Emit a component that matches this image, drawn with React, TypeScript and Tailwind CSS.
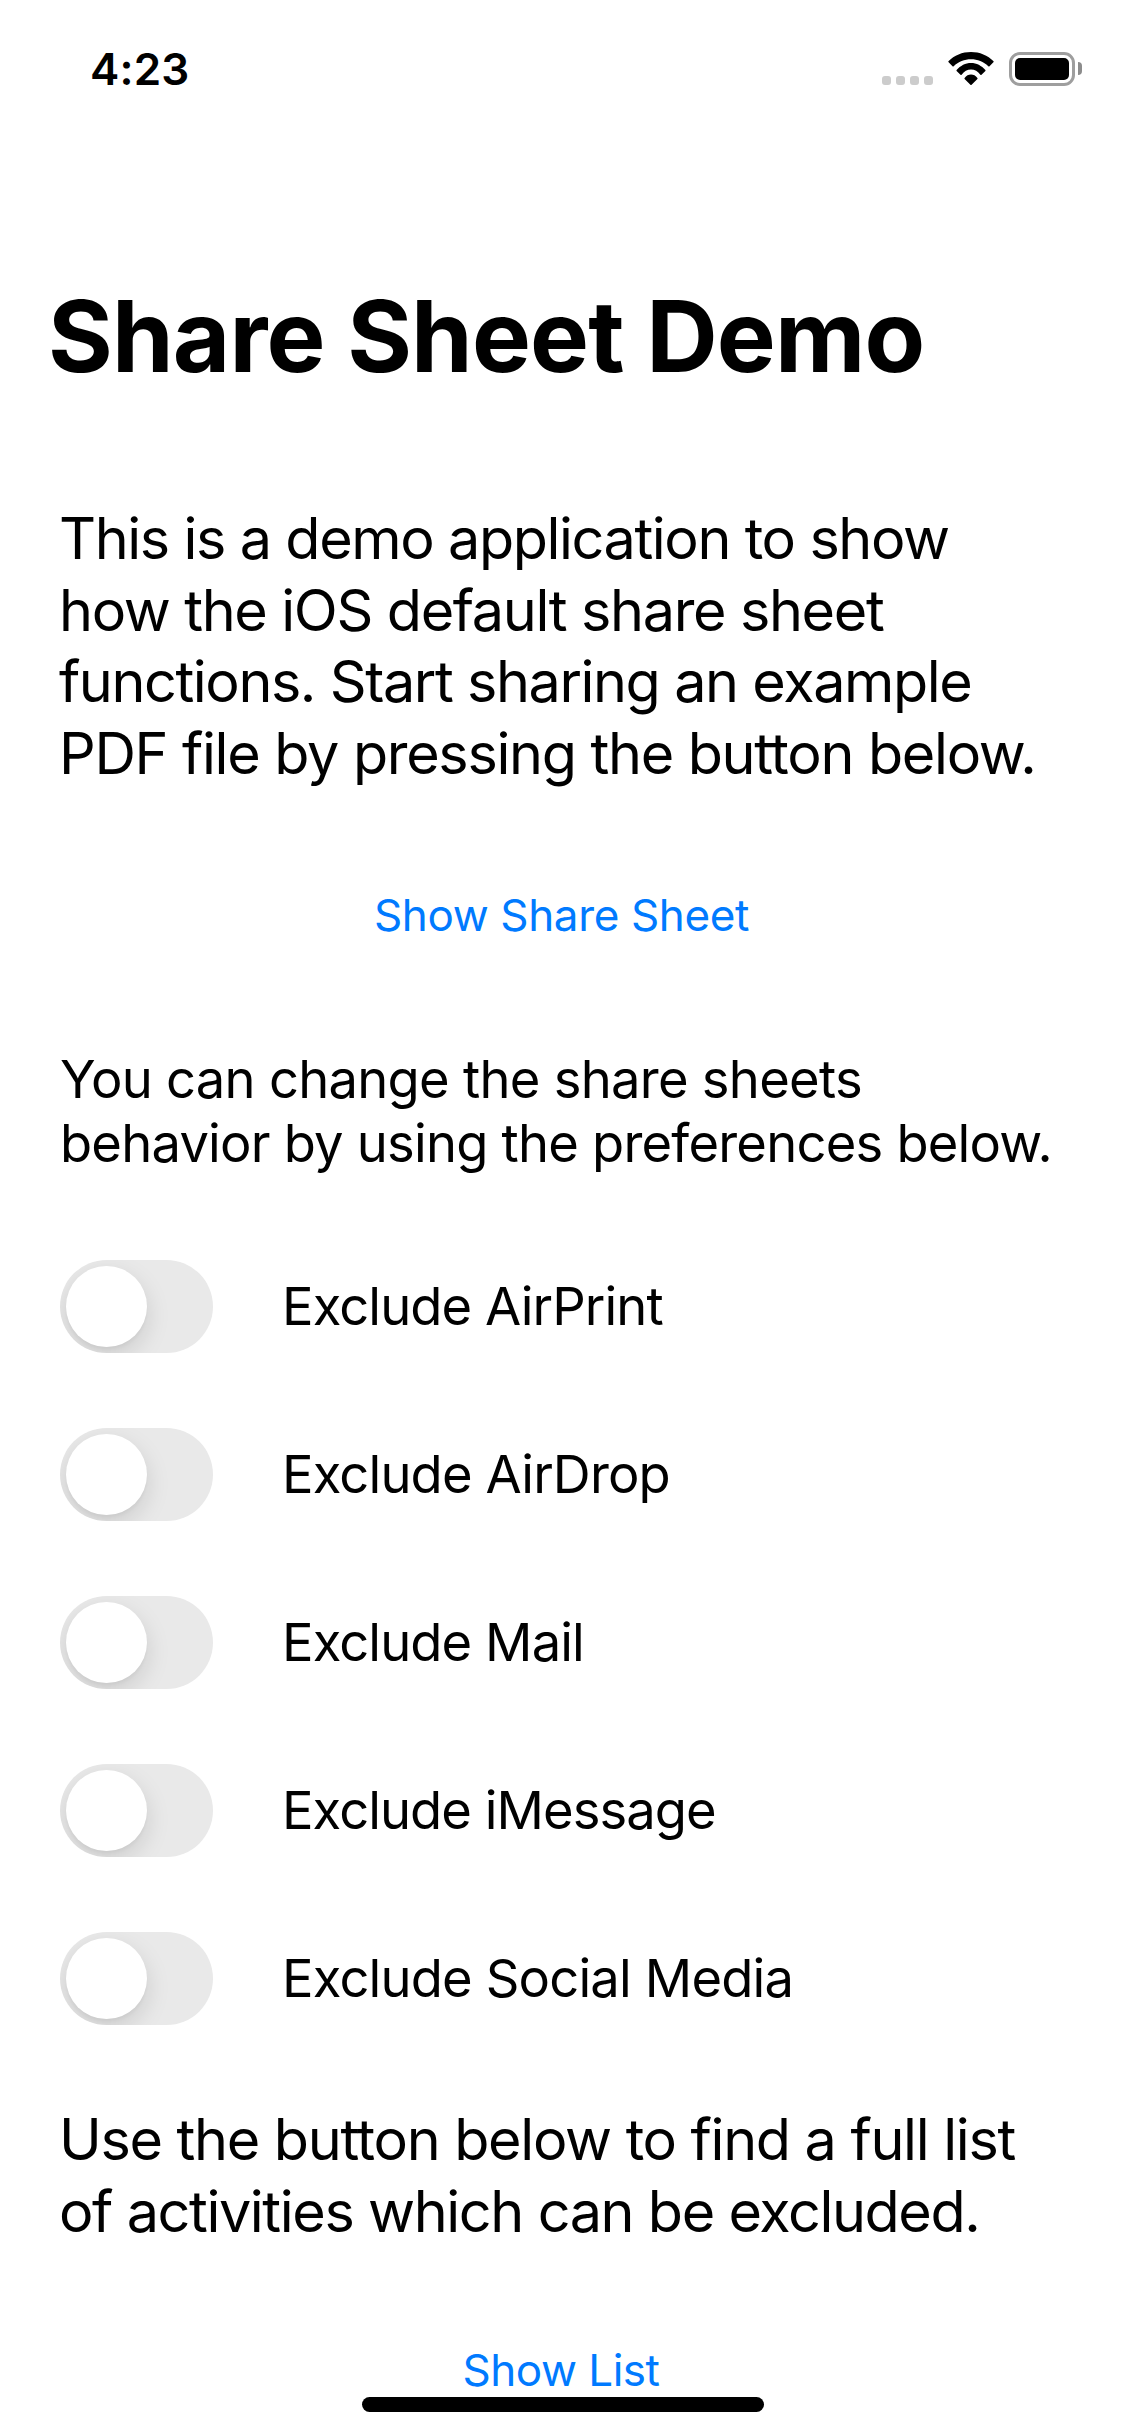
const toggles = [
  { label: "Exclude AirPrint", tracking: "tracking-[-0.9px]" },
  { label: "Exclude AirDrop", tracking: "tracking-[-0.84px]" },
  { label: "Exclude Mail", tracking: "tracking-[-0.9px]" },
  { label: "Exclude iMessage", tracking: "tracking-[-0.94px]" },
  { label: "Exclude Social Media", tracking: "tracking-[-0.82px]" },
];

function StatusBar() {
  return (
    <header className="flex h-[132px] items-start justify-between pl-[90px] pr-[43px]">
      <span className="mt-[42px] text-[44px] leading-[54px] font-semibold tracking-[0.2px]">4:23</span>
      <div className="mt-[52px] flex h-[34px] items-start">
        <div className="mt-6 flex gap-[5px]">
          {[0, 1, 2, 3].map((i) => (
            <span key={i} className="size-[9px] rounded-[3px] bg-[#cccccc]" />
          ))}
        </div>
        <svg className="ml-[15px] h-[34px] w-[46px]" viewBox="0 0 46 34">
          <path d="M.4 9.9a1 1 0 0 1 0-.6C6.300 3.300 14.300 0 23 0s16.700 3.300 22.600 9.300a1 1 0 0 1 0 .6l-4.100 4.300a1 1 0 0 1-1.200 0C35.600 9.800 29.500 7.300 23 7.300S10.400 9.800 5.700 14.200a1 1 0 0 1-1.200 0z" />
          <path d="M8.600 18C12.400 13.500 17.500 10.900 23 10.900s10.600 2.600 14.400 7.100a.8.800 0 0 1 0 .9l-3.900 3.900a.8.800 0 0 1-1.100 0C29.900 19.300 26.700 17.500 23 17.500s-6.900 1.800-9.400 5.300a.8.800 0 0 1-1.100 0l-3.900-3.900a.8.800 0 0 1 0-.9z" />
          <path d="M16.600 26C18.300 23.700 20.500 22.600 23 22.600s4.700 1.100 6.400 3.400a.7.700 0 0 1 0 .9L23.600 32.700a.8.800 0 0 1-1.200 0L16.600 26.900a.7.700 0 0 1 0-.9z" />
        </svg>
        <div className="ml-[15px] h-[34px] w-[66px] rounded-[11px] border-[3px] border-[#9e9e9e] p-[3px]">
          <div className="h-full w-full rounded-[5px] bg-black" />
        </div>
        <span className="mt-[10px] ml-[3px] h-[13px] w-1 rounded-r-full bg-[#8c8c8c]" />
      </div>
    </header>
  );
}

export default function App() {
  return (
    <main className="flex h-[2436px] w-[1125px] flex-col overflow-hidden bg-white font-['Inter',sans-serif] text-black">
      <StatusBar />
      <h1 className="mt-36 pl-[48px] text-[99px] leading-[120px] font-bold tracking-[-0.85px] whitespace-nowrap">
        Share Sheet Demo
      </h1>
      <p className="mt-[107px] pl-[59px] text-[57.5px] leading-[71.5px] whitespace-nowrap">
        <span className="block tracking-[-1.41px]">This is a demo application to show</span>
        <span className="block tracking-[-1.36px]">how the iOS default share sheet</span>
        <span className="block tracking-[-1.42px]">functions. Start sharing an example</span>
        <span className="block tracking-[-1.32px]">PDF file by pressing the button below.</span>
      </p>
      <button className="mt-[99px] self-center pr-[2px] text-[44px] leading-[54px] tracking-[-0.37px] text-[#007aff]">
        Show Share Sheet
      </button>
      <p className="mt-[105px] pl-[60px] text-[52.5px] leading-[64px] whitespace-nowrap">
        <span className="block tracking-[-0.72px]">You can change the share sheets</span>
        <span className="block tracking-[-0.78px]">behavior by using the preferences below.</span>
      </p>
      <div className="mt-[85px] flex flex-col gap-[75px] pl-[60px]">
        {toggles.map(({ label, tracking }) => (
          <div key={label} className="flex h-[93px] items-center gap-[69px]">
            <button
              role="switch"
              aria-checked="false"
              aria-label={label}
              className="h-[93px] w-[153px] overflow-hidden rounded-full bg-[#e9e9e9] p-[6px]"
            >
              <span className="block size-[81px] rounded-full bg-white shadow-[0_9px_24px_rgba(0,0,0,0.13),0_3px_3px_rgba(0,0,0,0.03)]" />
            </button>
            <span className={`pb-px text-[52.5px] leading-[60px] ${tracking}`}>{label}</span>
          </div>
        ))}
      </div>
      <p className="mt-[79px] pl-[59px] text-[57.5px] leading-[71.5px] whitespace-nowrap">
        <span className="block tracking-[-1.31px]">Use the button below to find a full list</span>
        <span className="block tracking-[-1.41px]">of activities which can be excluded.</span>
      </p>
      <button className="mt-24 self-center pr-[3px] text-[44px] leading-[54px] tracking-[-0.5px] text-[#007aff]">
        Show List
      </button>
      <div className="ml-[362px] h-[15px] w-[402px] shrink-0 rounded-full bg-black" />
    </main>
  );
}
